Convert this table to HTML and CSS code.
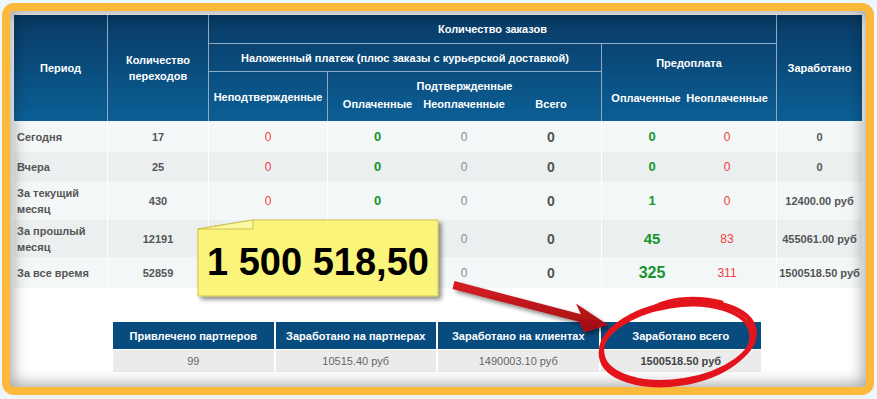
FILE: index.html
```html
<!DOCTYPE html>
<html lang="ru">
<head>
<meta charset="utf-8">
<title>Статистика</title>
<link rel="stylesheet" href="styles.css">
</head>
<body>
<div class="page">
  <div class="frame">
    <div class="stats">
      <div class="thead">
        <div class="th c-period">Период</div>
        <div class="th c-clicks">Количество<br>переходов</div>
        <div class="th c-orders">Количество заказов</div>
        <div class="th c-earned">Заработано</div>
        <div class="th c-cod">Наложенный платеж (плюс заказы с курьерской доставкой)</div>
        <div class="th c-prepaid">
          <div class="pre-title">Предоплата</div>
          <div class="pre-labels"><span>Оплаченные</span><span class="shift-l">Неоплаченные</span></div>
        </div>
        <div class="th c-unconf">Неподтвержденные</div>
        <div class="th c-conf">
          <div class="conf-title">Подтвержденные</div>
          <div class="conf-labels"><span>Оплаченные</span><span>Неоплаченные</span><span>Всего</span></div>
        </div>
      </div>
      <div class="tbody">
        <div class="row h31">
          <div class="td period">Сегодня</div>
          <div class="td sep num">17</div>
          <div class="td sep red">0</div>
          <div class="td sep green">0</div>
          <div class="td grey">0</div>
          <div class="td total">0</div>
          <div class="td sep green pre-paid">0</div>
          <div class="td red pre-unpaid">0</div>
          <div class="td sep num">0</div>
        </div>
        <div class="row h30">
          <div class="td period">Вчера</div>
          <div class="td sep num">25</div>
          <div class="td sep red">0</div>
          <div class="td sep green">0</div>
          <div class="td grey">0</div>
          <div class="td total">0</div>
          <div class="td sep green pre-paid">0</div>
          <div class="td red pre-unpaid">0</div>
          <div class="td sep num">0</div>
        </div>
        <div class="row h38">
          <div class="td period">За текущий месяц</div>
          <div class="td sep num">430</div>
          <div class="td sep red">0</div>
          <div class="td sep green">0</div>
          <div class="td grey">0</div>
          <div class="td total">0</div>
          <div class="td sep green pre-paid">1</div>
          <div class="td red pre-unpaid">0</div>
          <div class="td sep num">12400.00 руб</div>
        </div>
        <div class="row h37">
          <div class="td period">За прошлый месяц</div>
          <div class="td sep num">12191</div>
          <div class="td sep red"></div>
          <div class="td sep green"></div>
          <div class="td grey">0</div>
          <div class="td total">0</div>
          <div class="td sep green pre-paid big">45</div>
          <div class="td red pre-unpaid">83</div>
          <div class="td sep num">455061.00 руб</div>
        </div>
        <div class="row h31">
          <div class="td period">За все время</div>
          <div class="td sep num">52859</div>
          <div class="td sep red"></div>
          <div class="td sep green"></div>
          <div class="td grey">0</div>
          <div class="td total">0</div>
          <div class="td sep green pre-paid bigger">325</div>
          <div class="td red pre-unpaid">311</div>
          <div class="td sep num">1500518.50 руб</div>
        </div>
      </div>
    </div>

    <div class="summary">
      <div class="sh">Привлечено партнеров</div>
      <div class="sh">Заработано на партнерах</div>
      <div class="sh">Заработано на клиентах</div>
      <div class="sh">Заработано всего</div>
      <div class="sd">99</div>
      <div class="sd">10515.40 руб</div>
      <div class="sd">1490003.10 руб</div>
      <div class="sd strong">1500518.50 руб</div>
    </div>
  </div>

  <svg class="marks" width="877" height="399" viewBox="0 0 877 399">
    <defs>
      <filter id="noteShadow" x="-10%" y="-10%" width="130%" height="140%">
        <feDropShadow dx="3" dy="3" stdDeviation="2" flood-color="#000" flood-opacity="0.45"/>
      </filter>
      <linearGradient id="arrowGrad" x1="0" y1="0" x2="0" y2="1">
        <stop offset="0" stop-color="#d81f25"/>
        <stop offset="1" stop-color="#9e0d12"/>
      </linearGradient>
    </defs>
    <g filter="url(#noteShadow)">
      <polygon points="198,229 253,220 438,220 438,296 198,296" fill="#faf47a" stroke="#cfc24c" stroke-width="1"/>
    </g>
    <polygon points="198,229 253,220 253,229" fill="#fcf8a6" stroke="#cfc24c" stroke-width="1"/>
    <g filter="url(#noteShadow)">
      <polygon points="454.5,281 580.9,314.2 576,303.4 608,325 584,332.6 579.1,321.8 452.5,289" fill="url(#arrowGrad)"/>
    </g>
    <g fill="none" stroke="#e3141c" stroke-linecap="round">
      <ellipse cx="678" cy="342" rx="77" ry="39" transform="rotate(-9 678 342)" stroke-width="5"/>
      <ellipse cx="676" cy="345" rx="76" ry="39" transform="rotate(-9 676 345)" stroke-width="4"/>
      <path d="M655 306 C 672 297, 700 296, 722 302" stroke-width="3"/>
    </g>
  </svg>
  <div class="note-text">1 500 518,50</div>
</div>
</body>
</html>
```

FILE: styles.css
```css
html, body {
  margin: 0;
  padding: 0;
  background: #edf6fa;
}

body {
  font-family: "Liberation Sans", Arial, sans-serif;
}

.page {
  position: relative;
  width: 877px;
  height: 399px;
  padding: 3px 0 0 2px;
  box-sizing: border-box;
  overflow: hidden;
}

.frame {
  position: relative;
  width: 872px;
  height: 392px;
  box-sizing: border-box;
  border: 8px solid #fdb93b;
  border-radius: 12px;
  background: #ffffff;
  padding: 4px;
}

.frame::after {
  content: "";
  position: absolute;
  inset: 0;
  border-radius: 4px;
  box-shadow: inset 0 0 16px 2px rgba(0, 0, 0, 0.38);
  pointer-events: none;
}

.stats {
  --cols: 93px 101px 119px 100px 74px 100px 89px 86px 86px;
  width: 848px;
}

/* header */
.thead {
  display: grid;
  grid-template-columns: var(--cols);
  grid-template-rows: 28px 28px 50px;
  background: linear-gradient(#093a65, #0b5f95);
  color: #ffffff;
  font-weight: bold;
  font-size: 11px;
  line-height: 16px;
}

.th {
  display: flex;
  align-items: center;
  justify-content: center;
  text-align: center;
  border-left: 1px solid #8eabc3;
  white-space: nowrap;
}

.c-period { grid-column: 1; grid-row: 1 / 4; border-left: 0; }
.c-clicks { grid-column: 2; grid-row: 1 / 4; }
.c-orders { grid-column: 3 / 9; grid-row: 1; }
.c-earned { grid-column: 9; grid-row: 1 / 4; }
.c-cod { grid-column: 3 / 7; grid-row: 2; border-top: 1px solid #8eabc3; }
.c-unconf { grid-column: 3; grid-row: 3; border-top: 1px solid #8eabc3; }

.c-prepaid {
  grid-column: 7 / 9;
  grid-row: 2 / 4;
  border-top: 1px solid #8eabc3;
  flex-direction: column;
  justify-content: flex-start;
  align-items: stretch;
}

.pre-title {
  line-height: 39px;
  text-align: center;
}

.pre-labels {
  display: grid;
  grid-template-columns: 88px 86px;
  justify-items: center;
  line-height: 30px;
}

.shift-l {
  padding-right: 12px;
}

.c-conf {
  grid-column: 4 / 7;
  grid-row: 3;
  border-top: 1px solid #8eabc3;
  flex-direction: column;
  justify-content: flex-start;
  align-items: stretch;
  padding-top: 3px;
}

.conf-title {
  line-height: 22px;
  text-align: center;
}

.conf-labels {
  display: grid;
  grid-template-columns: 99px 74px 100px;
  justify-items: center;
  line-height: 14px;
}

/* body */
.row {
  display: grid;
  grid-template-columns: var(--cols);
}

.row:nth-child(odd) { background: #f3f7f8; }
.row:nth-child(even) { background: #ebeff0; }

.h31 { height: 31px; }
.h30 { height: 30px; }
.h38 { height: 38px; }
.h37 { height: 37px; }

.td {
  display: flex;
  align-items: center;
  justify-content: center;
  text-align: center;
  font-size: 11px;
  line-height: 16px;
  white-space: nowrap;
}

.td.sep {
  border-left: 1px solid #ffffff;
}

.period {
  justify-content: flex-start;
  text-align: left;
  padding-left: 3px;
  padding-right: 4px;
  white-space: normal;
  font-weight: bold;
  color: #555555;
}

.num {
  font-weight: bold;
  color: #555555;
}

.red {
  color: #f03c3c;
  font-size: 12px;
}

.green {
  color: #16952c;
  font-weight: bold;
  font-size: 13px;
}

.grey {
  color: #8c8c8c;
  font-size: 12px;
}

.total {
  color: #555555;
  font-weight: bold;
  font-size: 14px;
}

.pre-paid { padding-left: 12px; }
.pre-unpaid { padding-right: 12px; }
.big { font-size: 15px; }
.bigger { font-size: 16px; }

/* summary table */
.summary {
  margin: 34px 0 0 99px;
  width: 648px;
  display: grid;
  grid-template-columns: repeat(4, 1fr);
  grid-template-rows: 27px 22px;
  column-gap: 2px;
  row-gap: 1px;
}

.sh {
  background: #084c7f;
  color: #ffffff;
  font-weight: bold;
  font-size: 11px;
  display: flex;
  align-items: center;
  justify-content: center;
}

.sd {
  background: #ebebeb;
  color: #666666;
  font-size: 11px;
  display: flex;
  align-items: center;
  justify-content: center;
}

.sd.strong {
  font-weight: bold;
  color: #444444;
}

/* overlays */
.marks {
  position: absolute;
  left: 0;
  top: 0;
  pointer-events: none;
}

.note-text {
  position: absolute;
  left: 198px;
  top: 229px;
  width: 240px;
  height: 67px;
  display: flex;
  align-items: center;
  justify-content: center;
  font-weight: bold;
  font-size: 38px;
  color: #000000;
  white-space: nowrap;
}
```
